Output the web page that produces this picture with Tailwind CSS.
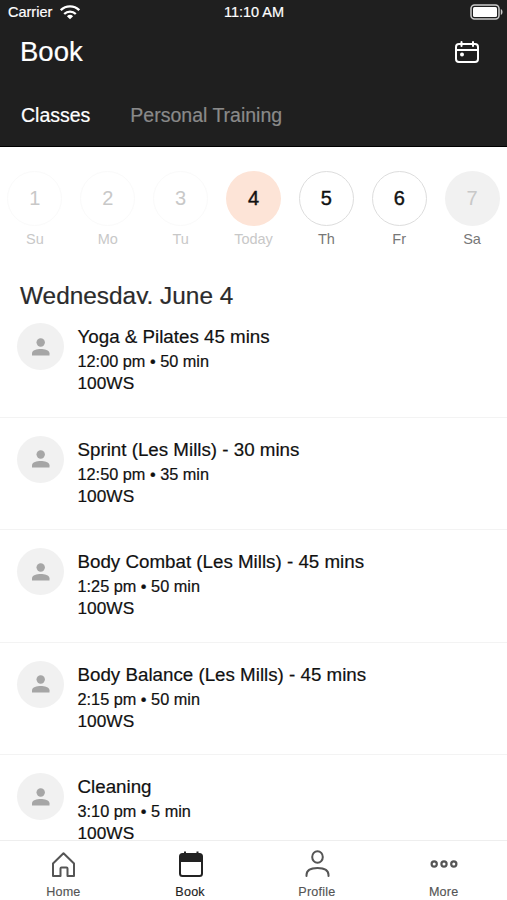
<!DOCTYPE html>
<html lang="en">
<head>
  <meta charset="UTF-8">
  <meta name="viewport" content="width=device-width, initial-scale=1.0">
  <title>Book</title>
  <script src="https://cdn.jsdelivr.net/npm/@tailwindcss/browser@4"></script>
</head>
<body class="bg-white font-['Liberation_Sans',Arial,sans-serif] text-[#111]">
  <div class="flex h-[900px] w-[507px] flex-col overflow-hidden">

    <!-- Header -->
    <header class="h-[147px] shrink-0 border-b border-black bg-[#1f1f1f] text-white [-webkit-text-stroke:0.2px]">
      <div class="grid h-6 grid-cols-3 items-center pl-2 pr-1 text-[14.5px]">
        <div class="flex items-center gap-2">
          <span class="pt-px">Carrier</span>
          <svg class="h-[15px] w-5" viewBox="0 0 20 15" fill="none" stroke="currentColor" stroke-width="2.3">
            <path d="M.8 5.2a13.2 13.2 0 0 1 18.4 0" />
            <path d="M4.2 9a8.4 8.4 0 0 1 11.6 0" />
            <path d="M10 14.2 6.9 11.3a4.5 4.5 0 0 1 6.2 0Z" fill="currentColor" stroke="none" />
          </svg>
        </div>
        <span class="pr-[3px] pt-px text-center">11:10 AM</span>
        <svg class="h-4 w-[33px] justify-self-end" viewBox="0 0 33 16" fill="none">
          <rect x="1" y="1" width="28" height="14" rx="3.5" stroke="#ccc" stroke-width="1.5" />
          <rect x="3" y="3" width="24" height="10" rx="1.5" fill="#fff" />
          <path d="M30.8 5v6c1-.4 1.7-1.5 1.7-3s-.7-2.6-1.7-3Z" fill="#ccc" />
        </svg>
      </div>
      <div class="flex h-14 items-center justify-between pl-5 pr-[27px]">
        <h1 class="text-[27.5px]">Book</h1>
        <svg class="h-6 w-[26px]" viewBox="0 0 26 24" fill="none" stroke="currentColor" stroke-width="2">
          <rect x="2" y="4" width="22" height="18" rx="3" />
          <path d="M2 10h22M7.5 2v4M19 2v4" stroke-linecap="round" />
          <circle cx="8" cy="14.5" r="2" fill="currentColor" stroke="none" />
        </svg>
      </div>
      <nav class="flex gap-10 pl-[21px] pt-[21px] text-[19.5px] leading-7">
        <span>Classes</span>
        <span class="text-[#8a8a8a]">Personal Training</span>
      </nav>
    </header>

    <main class="flex-1 overflow-hidden">
      <!-- Week picker -->
      <div class="-ml-[1.5px] grid w-[510px] grid-cols-7 pt-[23.5px] text-center text-[14.5px] text-[#777]">
        <div class="text-[#c8c8c8]">
          <div class="mx-auto grid size-[55px] place-items-center rounded-full border border-[#fafafa] text-[20px]">1</div>
          <div class="mt-1 leading-[18px]">Su</div>
        </div>
        <div class="text-[#c8c8c8]">
          <div class="mx-auto grid size-[55px] place-items-center rounded-full border border-[#fafafa] text-[20px]">2</div>
          <div class="mt-1 leading-[18px]">Mo</div>
        </div>
        <div class="text-[#c8c8c8]">
          <div class="mx-auto grid size-[55px] place-items-center rounded-full border border-[#fafafa] text-[20px]">3</div>
          <div class="mt-1 leading-[18px]">Tu</div>
        </div>
        <div class="text-[#c8c8c8]">
          <div class="mx-auto grid size-[55px] place-items-center rounded-full bg-[#fde4d7] text-[20px] text-[#111] [-webkit-text-stroke:0.4px]">4</div>
          <div class="mt-1 leading-[18px]">Today</div>
        </div>
        <div>
          <div class="mx-auto grid size-[55px] place-items-center rounded-full border border-[#ddd] text-[20px] text-[#111] [-webkit-text-stroke:0.4px]">5</div>
          <div class="mt-1 leading-[18px]">Th</div>
        </div>
        <div>
          <div class="mx-auto grid size-[55px] place-items-center rounded-full border border-[#ddd] text-[20px] text-[#111] [-webkit-text-stroke:0.4px]">6</div>
          <div class="mt-1 leading-[18px]">Fr</div>
        </div>
        <div>
          <div class="mx-auto grid size-[55px] place-items-center rounded-full bg-[#f1f1f1] text-[20px] text-[#c8c8c8]">7</div>
          <div class="mt-1 leading-[18px]">Sa</div>
        </div>
      </div>

      <h2 class="mt-[34.5px] h-[22px] overflow-hidden pl-5 text-[24.4px] leading-[28px] text-[#2b2b2b] [-webkit-text-stroke:0.2px]">Wednesday, June 4</h2>

      <!-- Class list -->
      <ul id="classes" class="pt-px"></ul>
    </main>

    <!-- Tab bar -->
    <nav class="grid h-[60px] shrink-0 grid-cols-4 border-t border-[#eee] bg-white pt-[9px] text-center text-[12.6px] tracking-[0.2px] text-[#555] [-webkit-text-stroke:0.15px]">
      <div>
        <svg class="mx-auto h-[28px] w-[26px]" viewBox="0 0 26 28" fill="none" stroke="currentColor" stroke-width="2" stroke-linejoin="round">
          <path d="M3 13.5 13.5 3.3 24 13.500V26H17.5v-7.500a1 1 0 0 0-1-1h-5a1 1 0 0 0-1 1V26H3Z" />
        </svg>
        <div class="mt-1.5 leading-4">Home</div>
      </div>
      <div class="text-[#222]">
        <svg class="mx-auto h-[28px] w-[26px]" viewBox="0 0 26 28" fill="none" stroke="currentColor" stroke-width="2">
          <rect x="3" y="4" width="22" height="22" rx="2.500" />
          <path d="M3 4h22v8H3z" fill="currentColor" stroke="none" />
          <path d="M8 1.500v4M20.500 1.500v4" />
        </svg>
        <div class="mt-1.5 leading-4">Book</div>
      </div>
      <div>
        <svg class="mx-auto h-[28px] w-[26px]" viewBox="0 0 26 28" fill="none" stroke="currentColor" stroke-width="2" stroke-linecap="round">
          <ellipse cx="13.5" cy="7" rx="5.3" ry="5.8" />
          <path d="M2.5 26v-1c0-4.500 3.500-7 11-7s11 2.500 11 7v1" />
        </svg>
        <div class="mt-1.5 leading-4">Profile</div>
      </div>
      <div>
        <svg class="mx-auto h-[28px] w-[28px]" viewBox="0 0 28 28" fill="none" stroke="currentColor" stroke-width="2.2">
          <circle cx="4.2" cy="14" r="2.6" />
          <circle cx="14" cy="14" r="2.6" />
          <circle cx="23.8" cy="14" r="2.6" />
        </svg>
        <div class="mt-1.5 leading-4">More</div>
      </div>
    </nav>
  </div>

  <script>
    const classes = [
      { name: "Yoga & Pilates 45 mins", time: "12:00 pm", length: "50 min" },
      { name: "Sprint (Les Mills) - 30 mins", time: "12:50 pm", length: "35 min" },
      { name: "Body Combat (Les Mills) - 45 mins", time: "1:25 pm", length: "50 min" },
      { name: "Body Balance (Les Mills) - 45 mins", time: "2:15 pm", length: "50 min" },
      { name: "Cleaning", time: "3:10 pm", length: "5 min" }
    ];

    document.getElementById('classes').innerHTML = classes.map(c => `
      <li class="flex h-[112.5px] gap-[13.5px] border-b border-[#f3f3f3] pl-[17px] pt-[18px]">
        <div class="grid size-[47px] shrink-0 place-items-center rounded-full bg-[#f1f1f1]">
          <svg class="h-[18px] w-[18px]" viewBox="0 0 18 18" fill="#a6a6a6">
            <circle cx="8.700" cy="4.500" r="4.200" />
            <path d="M0 17.500v-2.300c0-3 5-4.200 8.700-4.200s8.800 1.200 8.800 4.200v2.300Z" />
          </svg>
        </div>
        <div class="pt-0.5 [-webkit-text-stroke:0.2px]">
          <div class="text-[18.75px] leading-6">${c.name.replace('&', '&amp;')}</div>
          <div class="text-[16.3px] leading-6">${c.time} • ${c.length}</div>
          <div class="text-[17.3px] leading-[21px]">100WS</div>
        </div>
      </li>`).join('');
  </script>
</body>
</html>
